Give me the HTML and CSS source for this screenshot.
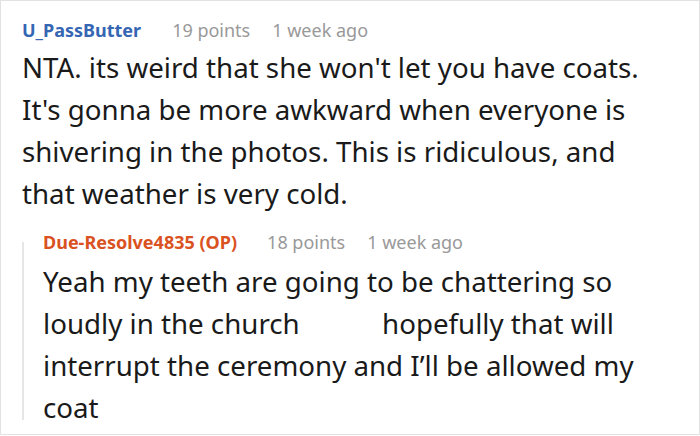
FILE: index.html
```html
<!DOCTYPE html>
<html>
<head>
<meta charset="utf-8">
<link rel="stylesheet" href="styles.css">
</head>
<body>
<div class="comment">
  <div class="meta">
    <span class="author">U_PassButter</span>
    <span class="points">19 points</span>
    <span class="time">1 week ago</span>
  </div>
  <div class="text">NTA. its weird that she won't let you have coats. It's gonna be more awkward when everyone is shivering in the photos. This is ridiculous, and that weather is very cold.</div>
  <div class="reply">
    <div class="thread-line"></div>
    <div class="reply-body">
      <div class="meta">
        <span class="author op">Due-Resolve4835 (OP)</span>
        <span class="points">18 points</span>
        <span class="time">1 week ago</span>
      </div>
      <div class="text reply-text">Yeah my teeth are going to be chattering so loudly in the church <span class="emoji-gap"></span> hopefully that will interrupt the ceremony and I’ll be allowed my coat</div>
    </div>
  </div>
</div>
</body>
</html>
```

FILE: styles.css
```css
html, body {
  margin: 0;
  padding: 0;
  background: #fff;
}

body {
  font-family: "Noto Sans", "Open Sans", sans-serif;
}

.comment {
  width: 700px;
  box-sizing: border-box;
  border: 1px solid #e2e2e2;
  padding: 17px 40px 6px 21px;
}

.meta {
  display: flex;
  align-items: baseline;
  font-size: 18px;
  line-height: 24px;
  color: #999;
  white-space: nowrap;
}

.author {
  font-weight: bold;
  color: #3566b3;
  margin-right: 31px;
}

.author.op {
  color: #d9521f;
  margin-right: 30px;
}

.points {
  margin-right: 22px;
}

.text {
  margin-top: 4px;
  font-size: 27.7px;
  line-height: 42px;
  color: #1a1a1a;
}

.reply-text {
  margin-top: 6px;
}

.reply {
  display: flex;
  margin-top: 16px;
}

.thread-line {
  width: 2px;
  flex: none;
  background: #e6e6e6;
  margin: 12px 19px 8px 0;
}

.reply-body {
  flex: 1;
}

.emoji-gap {
  display: inline-block;
  width: 68px;
}
```
